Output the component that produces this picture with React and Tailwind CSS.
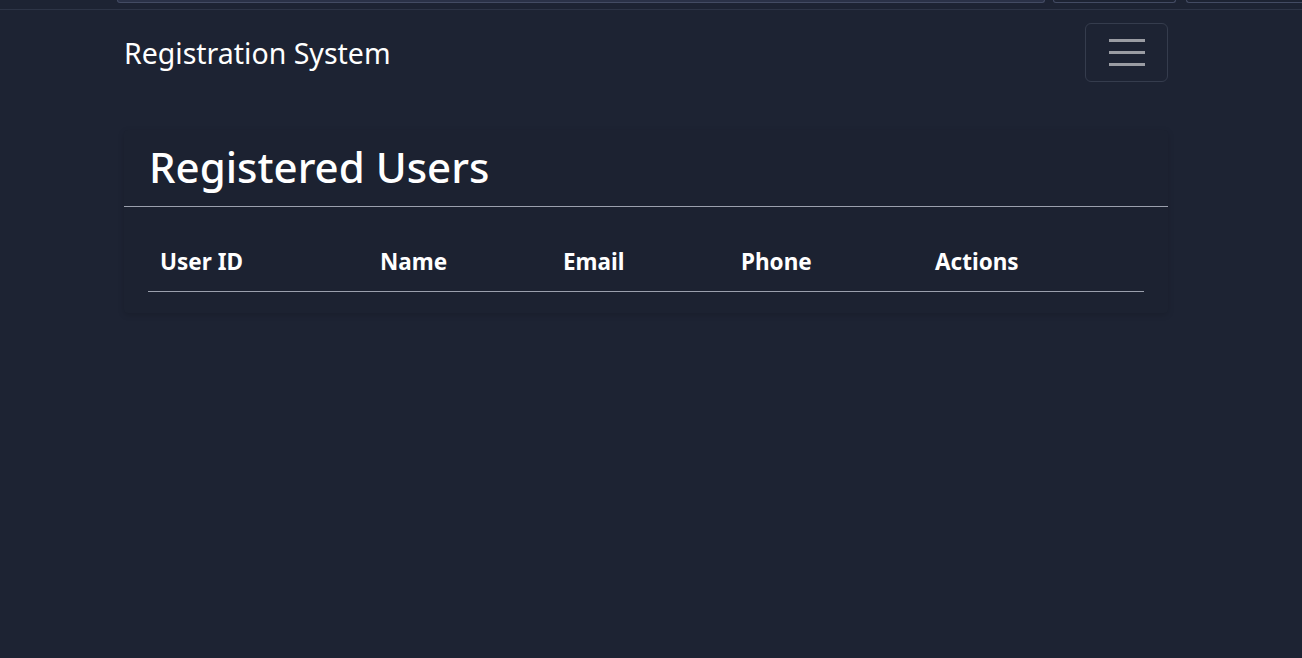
export default function App() {
  const cols = [
    { label: "User ID", w: "w-[220px]" },
    { label: "Name", w: "w-[183px]" },
    { label: "Email", w: "w-[178px]" },
    { label: "Phone", w: "w-[194px]" },
    { label: "Actions", w: "w-[221px]" },
  ];

  return (
    <div
      className="min-h-[658px] bg-[#1d2333] text-white"
      style={{ fontFamily: '"Noto Sans", "Open Sans", sans-serif' }}
    >
      {/* cropped browser strip at top */}
      <div className="h-[10px] border-b border-[#2d3446] flex">
        <div className="ml-[117px] w-[928px] h-[3px] bg-[#2a3147] border-x border-b border-[#434b63] rounded-b-md" />
        <div className="ml-[8px] w-[123px] h-[3px] border-x border-b border-[#434b63] rounded-b-md" />
        <div className="ml-[10px] flex-1 h-[3px] border-l border-b border-[#434b63] rounded-bl-md" />
      </div>

      <div className="ml-[124px] w-[1044px]">
        <nav className="flex items-center justify-between pt-[12px] h-[72px]">
          <span className="text-[28.5px] leading-none mt-[3px]">Registration System</span>
          <button className="w-[83px] h-[59px] mt-[1px] border border-[#353c4d] rounded-md flex flex-col items-center justify-center gap-[9px]">
            <span className="block w-[36px] h-[3px] bg-[#9a9ca3]" />
            <span className="block w-[36px] h-[3px] bg-[#9a9ca3]" />
            <span className="block w-[36px] h-[3px] bg-[#9a9ca3]" />
          </button>
        </nav>

        <div className="mt-[48px] bg-[#1c2231] shadow-[0_2px_6px_rgba(0,0,0,0.15)] rounded-sm pb-[21px]">
          <div className="px-[25px] pt-[9px] pb-[11px] border-b border-[#9ba0ad]">
            <h1 className="text-[42px] leading-[56px] font-medium">Registered Users</h1>
          </div>
          <div className="px-[24px] pt-[24px]">
            <table className="w-full border-collapse">
              <thead>
                <tr className="border-b border-[#9ba0ad]">
                  {cols.map((c) => (
                    <th
                      key={c.label}
                      className={`${c.w} text-left px-[12px] pt-[17px] pb-[15px] text-[22.5px] font-bold leading-[28px]`}
                    >
                      {c.label}
                    </th>
                  ))}
                </tr>
              </thead>
              <tbody />
            </table>
          </div>
        </div>
      </div>
    </div>
  );
}
